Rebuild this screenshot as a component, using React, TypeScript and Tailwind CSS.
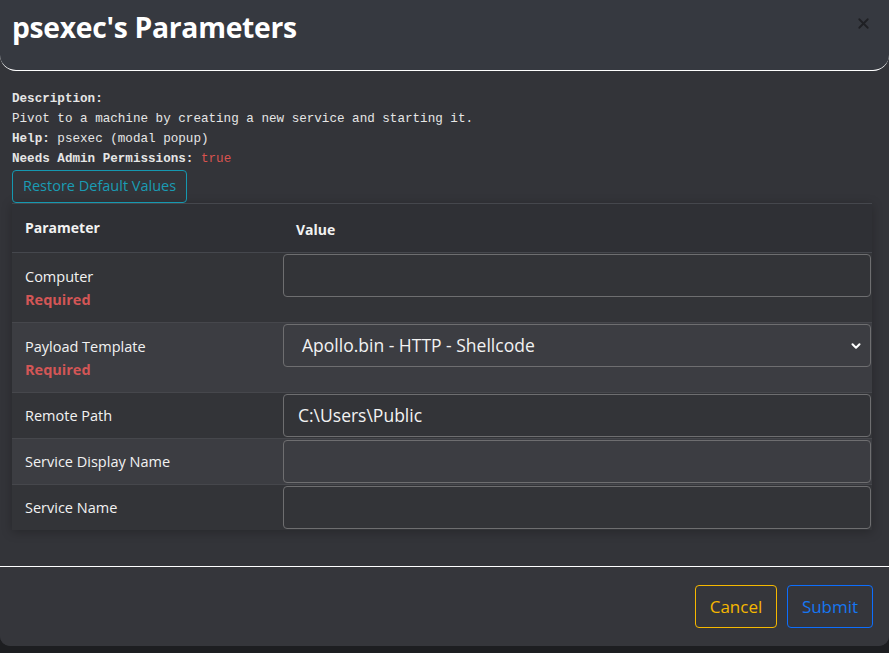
import { ChevronDown, X } from 'lucide-react';

const rows = [
  { name: 'Computer', required: true, kind: 'text', value: '' },
  { name: 'Payload Template', required: true, kind: 'select', value: 'Apollo.bin - HTTP - Shellcode' },
  { name: 'Remote Path', required: false, kind: 'text', value: 'C:\\Users\\Public' },
  { name: 'Service Display Name', required: false, kind: 'text', value: '' },
  { name: 'Service Name', required: false, kind: 'text', value: '' },
];

export default function App() {
  return (
    <div className="w-[889px] h-[653px] bg-[#1d1e21] overflow-hidden" style={{ fontFamily: '"Open Sans", "Noto Sans", sans-serif' }}>
      <div className="h-[646px] flex flex-col bg-[#333439] rounded-b-[10px] overflow-hidden">
        <div className="h-[71px] shrink-0 flex items-start justify-between bg-[#363940] border-b border-white rounded-b-[16px] pl-3 pr-[17px] pt-[6px]">
          <h2 className="text-[28.3px] font-bold text-white tracking-[-0.3px] leading-[42px]">psexec's Parameters</h2>
          <X size={17} strokeWidth={2.5} className="text-[#1f2024] mt-[9px]" />
        </div>

        <div className="flex-1 px-3 pt-[18px]">
          <div className="text-[12.6px] leading-[20px] text-[#e6e6e6]" style={{ fontFamily: '"Liberation Mono", "DejaVu Sans Mono", monospace' }}>
            <div className="font-bold">Description:</div>
            <div>Pivot to a machine by creating a new service and starting it.</div>
            <div><span className="font-bold">Help:</span> psexec (modal popup)</div>
            <div><span className="font-bold">Needs Admin Permissions:</span> <span className="text-[#d9534f]">true</span></div>
          </div>
          <button className="mt-px h-[33px] px-[10px] border border-[#1598b0] rounded text-[#1a9cb4] text-[14.5px] leading-none">
            Restore Default Values
          </button>

          <div className="w-[860px] shadow-[0_2px_10px_rgba(0,0,0,0.25)] text-[#f2f2f2]">
            <div className="flex h-[50px] bg-[#2f3035] border-t border-b border-[#45474d]">
              <div className="w-[271px] pl-[13px] pt-[13px] font-bold text-[14px]">Parameter</div>
              <div className="flex-1 pl-[13px] pt-[15px] font-bold text-[14px]">Value</div>
            </div>
            {rows.map((r, i) => (
              <div key={r.name} className={`flex ${i % 2 === 1 ? 'bg-[#3c3d42]' : 'bg-[#333438]'} ${i < rows.length - 1 ? 'border-b border-[#46474c]' : ''}`}>
                <div className={`w-[271px] pl-[13px] text-[14.5px] ${r.required ? 'pt-[13px] pb-[11px]' : 'flex items-center'}`}>
                  <div className="leading-[22px]">{r.name}</div>
                  {r.required && <div className="leading-[23px] font-bold text-[#d35656]">Required</div>}
                </div>
                <div className="flex-1 pt-[1px] pb-[1px] pr-px">
                  {r.kind === 'select' ? (
                    <div className="h-[43px] flex items-center justify-between border border-[#6e6e70] rounded pl-[18px] pr-[7px] text-[17.5px]">
                      <span>{r.value}</span>
                      <ChevronDown size={14} strokeWidth={3.5} className="text-white" />
                    </div>
                  ) : (
                    <div className="h-[43px] flex items-center border border-[#6e6e70] rounded pl-[14px] text-[17.5px]">
                      {r.value}
                    </div>
                  )}
                </div>
              </div>
            ))}
          </div>
        </div>

        <div className="h-[80px] shrink-0 flex items-center justify-end gap-[10px] border-t border-white bg-[#35363b] pr-[16px]">
          <button className="h-[43px] w-[82px] border border-[#f5b800] rounded text-[#f5b800] text-[17px]">Cancel</button>
          <button className="h-[43px] w-[86px] border border-[#0d6efd] rounded text-[#1677f2] text-[17px]">Submit</button>
        </div>
      </div>
    </div>
  );
}
